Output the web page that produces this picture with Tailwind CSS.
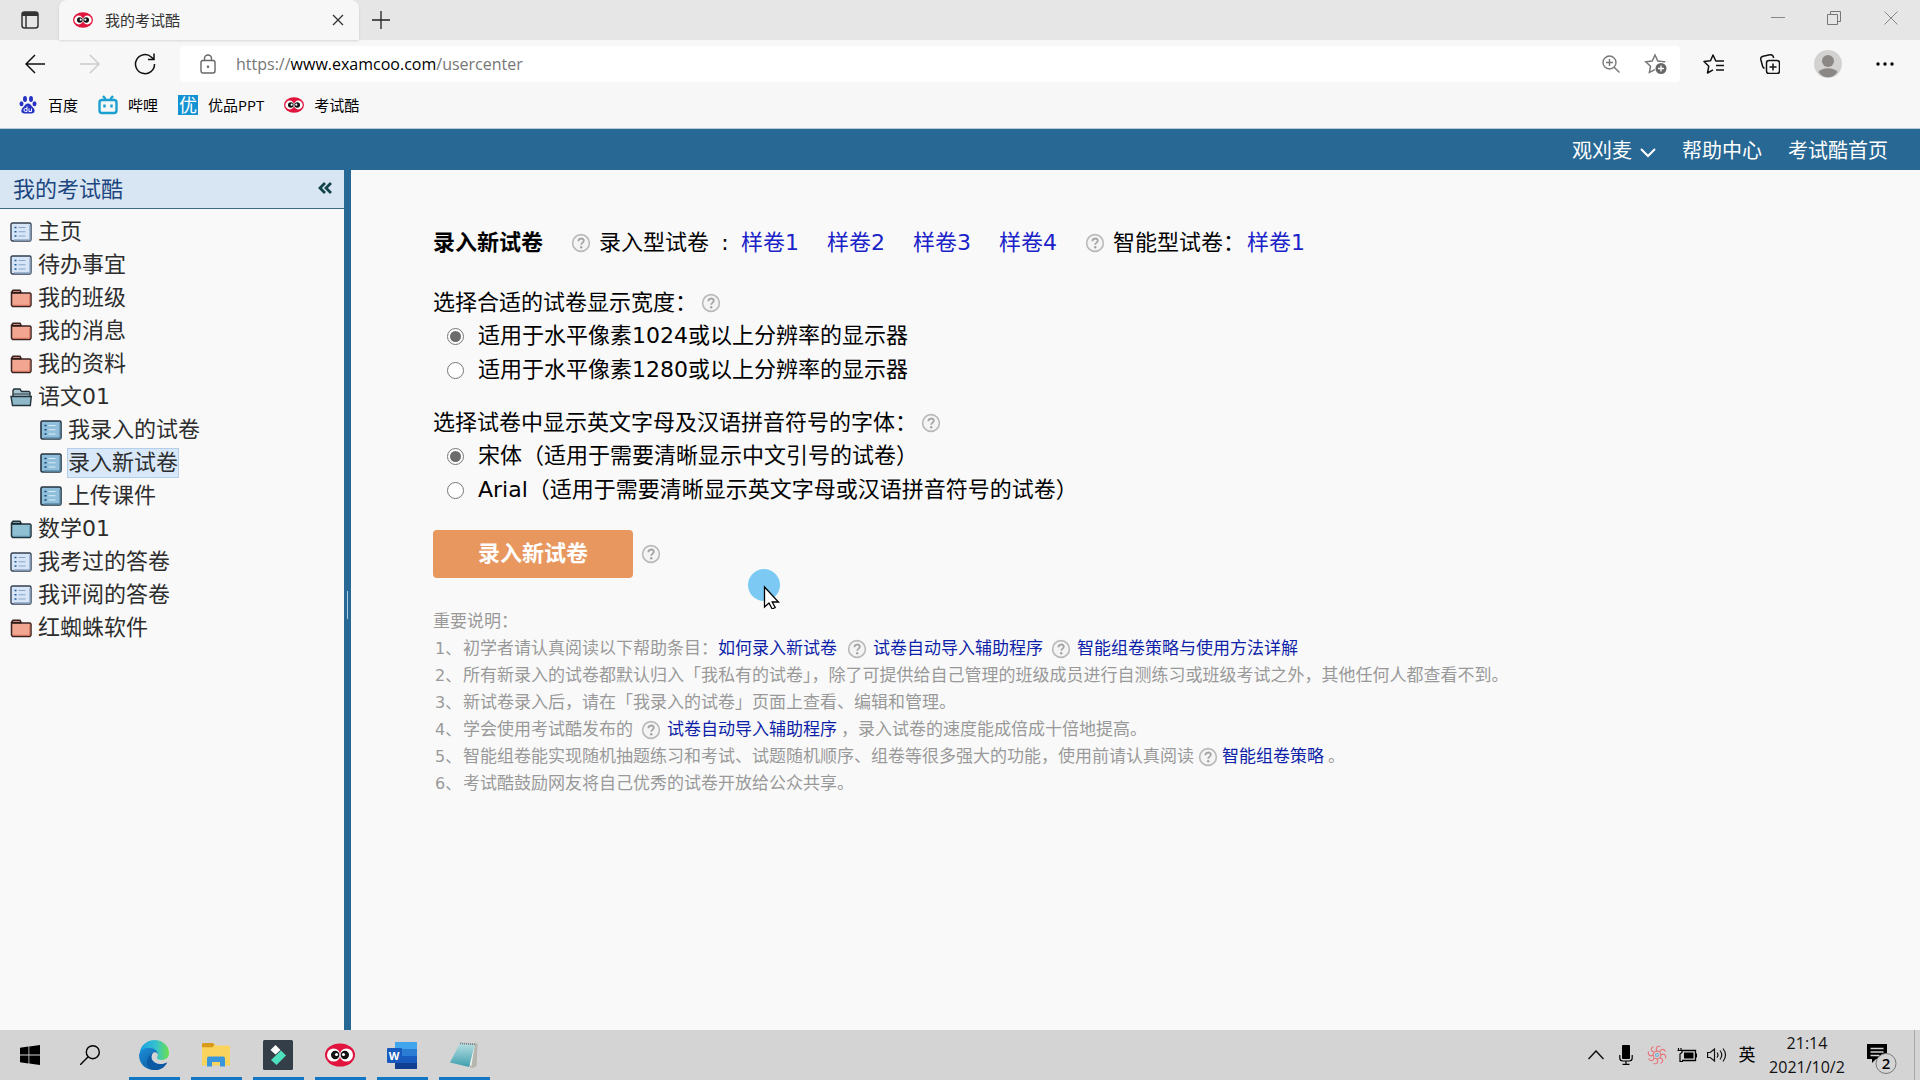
<!DOCTYPE html>
<html lang="zh-CN">
<head>
<meta charset="utf-8">
<title>我的考试酷</title>
<script src="https://cdn.jsdelivr.net/npm/@tailwindcss/browser@4"></script>
</head>
<body class="flex h-screen flex-col overflow-hidden bg-[#f9f9f9] font-['Open_Sans','Noto_Sans_CJK_SC',sans-serif] text-[15px] leading-5 text-black">
<svg class="absolute size-0" aria-hidden="true">
  <defs>
    <linearGradient id="edgeA" x1="0" y1="0" x2="1" y2="0"><stop offset="0" stop-color="#1aa0e0"/><stop offset=".55" stop-color="#35c1d0"/><stop offset="1" stop-color="#6be04a"/></linearGradient>
    <linearGradient id="edgeB" x1="0" y1="0" x2="1" y2="1"><stop offset="0" stop-color="#1b8fd8"/><stop offset="1" stop-color="#0c4f92"/></linearGradient>
    <linearGradient id="note" x1="0" y1="0" x2="0" y2="1"><stop offset="0" stop-color="#b9e0e4"/><stop offset="1" stop-color="#3e9fae"/></linearGradient>
    <symbol id="owl" viewBox="0 0 30 24">
      <ellipse cx="15" cy="12" rx="15" ry="11.5" fill="#e0143c"/>
      <circle cx="8.6" cy="12" r="6.6" fill="#fff"/><circle cx="21.4" cy="12" r="6.6" fill="#fff"/>
      <circle cx="10.2" cy="12" r="4.2" fill="#111"/><circle cx="19.8" cy="12" r="4.2" fill="#111"/>
      <circle cx="11.5" cy="11.5" r="1.6" fill="#fff"/><circle cx="18.5" cy="11.5" r="1.6" fill="#fff"/>
    </symbol>
    <symbol id="help" viewBox="0 0 20 20">
      <circle cx="10" cy="10" r="8.4" fill="#f4f4f4" stroke="#b9b9b9" stroke-width="1.6"/>
      <path d="M7.4 8.2c0-3.6 5.4-3.4 5.4-.4 0 1.8-2.6 1.9-2.6 4" fill="none" stroke="#a3a3a3" stroke-width="1.8"/><circle cx="10.2" cy="14.2" r="1.2" fill="#a3a3a3"/>
    </symbol>
    <symbol id="page" viewBox="0 0 22 20">
      <rect x="1" y="1" width="20" height="18" rx="1.5" fill="#d6e6f8" stroke="#333f50" stroke-width="1.4"/>
      <path d="M20 3v15H4" fill="none" stroke="#8ea6c4" stroke-width="1.4"/>
      <path d="M4.5 5.5h2M4.5 9.7h2M4.5 14h2" stroke="#1f5b94" stroke-width="1.6"/><path d="M8.5 5.5h7M8.5 9.7h7M8.5 14h7" stroke="#8ba5c2" stroke-width="1.1"/>
    </symbol>
    <symbol id="pageb" viewBox="0 0 22 20">
      <rect x="1" y="1" width="20" height="18" rx="1.5" fill="#8fbfdb" stroke="#25333f" stroke-width="1.6"/>
      <path d="M20 3v15H4" fill="none" stroke="#5d8ba8" stroke-width="1.4"/>
      <path d="M4.5 5.5h2M4.5 9.7h2M4.5 14h2" stroke="#0f4673" stroke-width="1.6"/><path d="M8.5 5.5h7M8.5 9.7h7M8.5 14h7" stroke="#dcecf5" stroke-width="1.1"/>
    </symbol>
    <symbol id="folder" viewBox="0 0 22 20">
      <path d="M1.5 17V4.200l1.500-2h7l1.500 2.800H20l1 1v11l-1 1.500H2.500z" fill="#f2a692" stroke="#3a2320" stroke-width="1.5"/>
      <path d="M2 4.800h9" stroke="#2b1a18" stroke-width="2"/><path d="M19.800 7v10.300H3.500" fill="none" stroke="#d0705a"/>
    </symbol>
    <symbol id="folderb" viewBox="0 0 22 20">
      <path d="M1.500 17V4.200l1.500-2h7l1.500 2.800H20l1 1v11l-1 1.500H2.500z" fill="#8fbfd3" stroke="#22333b" stroke-width="1.500"/>
      <path d="M2 4.800h9" stroke="#17252b" stroke-width="2"/><path d="M19.800 7v10.300H3.500" fill="none" stroke="#5690aa"/>
    </symbol>
    <symbol id="folderopen" viewBox="0 0 22 20">
      <path d="M3 17V3.500l1-1.500h6l1.500 2.500H19l1 1V17z" fill="#a9c5cf" stroke="#22333b" stroke-width="1.400"/>
      <path d="M1 9.500h20.300l-1 9H2.500z" fill="#8fb9c9" stroke="#22333b" stroke-width="1.400"/><path d="M3.500 7h16" stroke="#22333b"/>
    </symbol>
  </defs>
</svg>

<!-- tab strip -->
<header class="shrink-0 bg-[#f7f7f7]">
  <div class="flex h-10 items-stretch bg-[#e7e6e7]">
    <button aria-label="标签页操作" class="flex w-[59px] items-center justify-center">
      <svg class="size-[18px]" viewBox="0 0 18 18" fill="none" stroke="#333" stroke-width="1.500"><rect x="1" y="1" width="16" height="16" rx="2.500"/><path d="M1 3h16" stroke-width="4"/><path d="M5 5v12"/></svg>
    </button>
    <div class="flex w-[300px] items-center gap-3 rounded-t-lg bg-[#f7f7f7] pr-[11px] pl-3.5 shadow">
      <svg class="h-4 w-5"><use href="#owl"/></svg>
      <span class="flex-1 text-[#333]">我的考试酷</span>
      <button aria-label="关闭标签页" class="flex size-5 items-center justify-center"><svg class="size-3" viewBox="0 0 12 12" stroke="#333" stroke-width="1.300"><path d="M1 1l10 10M11 1L1 11"/></svg></button>
    </div>
    <button aria-label="新建标签页" class="flex w-11 items-center justify-center"><svg class="size-[18px]" viewBox="0 0 18 18" stroke="#222" stroke-width="1.300"><path d="M9 0v18M0 9h18"/></svg></button>
    <div class="ml-auto flex pb-1">
      <button aria-label="最小化" class="flex w-14 items-center justify-center"><svg class="size-3.5" viewBox="0 0 14 14" stroke="#888"><path d="M0 6.500h14"/></svg></button>
      <button aria-label="还原" class="flex w-14 items-center justify-center"><svg class="size-3.5" viewBox="0 0 14 14" fill="none" stroke="#777"><path d="M.5 3.500h10v10H.5zM3.500 3V.5h10v10H11"/></svg></button>
      <button aria-label="关闭" class="flex w-[58px] items-center justify-center"><svg class="size-3.5" viewBox="0 0 14 14" stroke="#888"><path d="M.5.5l13 13M13.500.5l-13 13"/></svg></button>
    </div>
  </div>

  <!-- toolbar -->
  <div class="flex h-12 items-center pl-[7px]">
    <button aria-label="后退" class="flex w-[55px] items-center justify-center"><svg class="size-5" viewBox="0 0 20 20" fill="none" stroke="#111" stroke-width="1.500"><path d="M10 1l-9 9 9 9M1 10h19"/></svg></button>
    <button aria-label="前进" class="flex w-[55px] items-center justify-center"><svg class="size-5" viewBox="0 0 20 20" fill="none" stroke="#ccc" stroke-width="1.500"><path d="M10 1l9 9-9 9M19 10H0"/></svg></button>
    <button aria-label="刷新" class="flex w-[55px] items-center justify-center"><svg class="size-[22px]" viewBox="0 0 22 22" fill="none" stroke="#111" stroke-width="1.500"><path d="M20.500 11A9.500 9.500 0 1 1 17.500 4.200L20 6.500M20 .5v6h-6"/></svg></button>
    <div class="ml-2 flex h-9 flex-1 items-center rounded bg-white pl-5 pr-3">
      <svg class="h-5 w-4 shrink-0" viewBox="0 0 16 20" fill="none" stroke="#666" stroke-width="1.400"><rect x="1" y="6.500" width="14" height="12.500" rx="2"/><path d="M4.500 6.500V4.500a3.500 3.500 0 0 1 7 0v2"/><circle cx="8" cy="12.700" r=".6" fill="#666"/></svg>
      <a href="#" class="ml-5 flex-1 text-[16px] text-[#767676]">https://<span class="text-black">www.examcoo.com</span>/usercenter</a>
      <button aria-label="缩放" class="mr-6"><svg class="size-[18px]" viewBox="0 0 18 18" fill="none" stroke="#777" stroke-width="1.400"><circle cx="7.500" cy="7.500" r="6.500"/><path d="M12.200 12.200L17.500 17.500M4 7.500h7M7.500 4v7"/></svg></button>
      <button aria-label="添加到收藏夹"><svg class="h-[22px] w-6" viewBox="0 0 24 22"><path d="M11 2l2.800 6 6.400.8-4.700 4.400 1.200 6.200L11 16.500l-5.600 2.900 1.100-6.200L1.800 8.800l6.400-.8z" fill="none" stroke="#777" stroke-width="1.500"/><circle cx="17" cy="15.500" r="6.500" fill="#fff"/><circle cx="17" cy="15.500" r="5.500" fill="#666"/><path d="M14 15.500h6M17 12.500v6" stroke="#fff" stroke-width="1.300"/></svg></button>
    </div>
    <div class="flex items-center pl-1.5 pr-2">
      <button aria-label="收藏夹" class="flex w-14 items-center justify-center"><svg class="h-5 w-[22px]" viewBox="0 0 22 20" fill="none" stroke="#111" stroke-width="1.500"><path d="M13 7h-.2L10 1 7.500 6.800 1 7.500l4.800 4.700L4.500 19l5.500-3.200M13 7h8M13 11.500h8M13 16h8" stroke-linejoin="round"/></svg></button>
      <button aria-label="集锦" class="flex w-14 items-center justify-center"><svg class="size-5" viewBox="0 0 20 20" fill="none" stroke="#111" stroke-width="1.500"><rect x="6.500" y="6.500" width="13" height="13" rx="2.500"/><path d="M13 9.500v7M9.500 13h7M4.500 14.500C3 14 2.800 13 2.400 11.500L.8 5.500C.4 3.700 1.300 2.600 3 2.200L10 .8c2-.4 3 .4 3.400 2.200l.2 1"/></svg></button>
      <button aria-label="个人资料" class="flex w-[60px] items-center justify-center"><svg class="size-7" viewBox="0 0 28 28"><circle cx="14" cy="14" r="14" fill="#d4d2d1"/><circle cx="14" cy="11" r="6" fill="#8a8785"/><path d="M4.500 22c4-5 15-5 19 0-4 7-15 7-19 0z" fill="#8a8785"/></svg></button>
      <button aria-label="设置及其他" class="flex w-[54px] items-center justify-center"><svg class="h-1 w-[18px]" viewBox="0 0 18 4"><circle cx="2" cy="2" r="1.700"/><circle cx="9" cy="2" r="1.700"/><circle cx="16" cy="2" r="1.700"/></svg></button>
    </div>
  </div>

  <!-- favourites -->
  <nav class="flex h-[41px] items-center gap-5 border-b border-[#b9cbd8] pb-1.5 pl-[18px]">
    <a href="#" class="flex items-center gap-2.5">
      <svg class="size-5" viewBox="0 0 20 20" fill="#2733c4"><ellipse cx="7" cy="4" rx="2" ry="2.900"/><ellipse cx="13" cy="4" rx="2" ry="2.900"/><ellipse cx="3.500" cy="8.800" rx="2" ry="2.500"/><ellipse cx="16.500" cy="8.800" rx="2" ry="2.500"/><path d="M10 8.500c2.500 0 3 2 5 4 3 3 1.500 6-1.500 6h-7c-3 0-4.500-3-1.500-6 2-2 2.500-4 5-4z"/><path d="M9 11.500v5H7.500a1.300 1.300 0 0 1 0-3H9M11 13.500v3h2.500v-3" fill="none" stroke="#fff"/></svg>百度</a>
    <a href="#" class="flex items-center gap-2.5">
      <svg class="size-5" viewBox="0 0 20 20" fill="none" stroke="#1aa0d0" stroke-width="2.400"><rect x="1.500" y="5" width="17" height="13" rx="2.500"/><path d="M5 1l2.500 3M15 1l-2.500 3M6.500 9.500v3M13.500 9.500v3"/></svg>哔哩</a>
    <a href="#" class="flex items-center gap-2.5"><span class="flex size-5 items-center justify-center bg-[#1592d2] text-[18px] text-white">优</span>优品PPT</a>
    <a href="#" class="flex items-center gap-2.5"><svg class="h-4 w-5"><use href="#owl"/></svg>考试酷</a>
  </nav>
</header>

<!-- site bar -->
<div class="flex h-[41px] shrink-0 items-center justify-end gap-[26px] bg-[#286894] pt-0.5 pr-8 text-[20px] text-white">
  <button class="flex items-center gap-2">观刈麦<svg class="mt-1 h-2.5 w-4" viewBox="0 0 16 10" fill="none" stroke="#fff" stroke-width="2"><path d="M1 1l7 7 7-7"/></svg></button>
  <a href="#">帮助中心</a>
  <a href="#">考试酷首页</a>
</div>

<div class="flex min-h-0 flex-1 font-['DejaVu_Sans','Noto_Sans_CJK_SC',sans-serif] text-[22px]">
  <!-- navigation tree -->
  <aside class="w-[344px] shrink-0 leading-7 text-[#2d2d2d]">
    <div class="flex h-[39px] items-center justify-between border-b border-[#3b6b85] bg-[#d8e6f3] pt-0.5 pr-3 pl-[13px] text-[#1d4680]">
      <h2>我的考试酷</h2>
      <button aria-label="折叠" class="pb-1"><svg class="h-3 w-3.5" viewBox="0 0 14 12" fill="none" stroke="#12454a" stroke-width="2.800"><path d="M7 1L2 6l5 5M13 1L8 6l5 5"/></svg></button>
    </div>
    <ul class="pt-1.5 pl-2.5 *:flex *:h-[33px] *:items-center *:gap-1.5">
      <li><svg class="h-5 w-[22px]"><use href="#page"/></svg><a href="#">主页</a></li>
      <li><svg class="h-5 w-[22px]"><use href="#page"/></svg><a href="#">待办事宜</a></li>
      <li><svg class="h-5 w-[22px]"><use href="#folder"/></svg><a href="#">我的班级</a></li>
      <li><svg class="h-5 w-[22px]"><use href="#folder"/></svg><a href="#">我的消息</a></li>
      <li><svg class="h-5 w-[22px]"><use href="#folder"/></svg><a href="#">我的资料</a></li>
      <li><svg class="h-5 w-[22px]"><use href="#folderopen"/></svg><a href="#">语文01</a></li>
      <li class="pl-[30px]"><svg class="h-5 w-[22px]"><use href="#pageb"/></svg><a href="#">我录入的试卷</a></li>
      <li class="pl-[30px]"><svg class="h-5 w-[22px]"><use href="#pageb"/></svg><a href="#" class="-mx-px border border-[#b5cfe8] bg-[#d8e8f8]">录入新试卷</a></li>
      <li class="pl-[30px]"><svg class="h-5 w-[22px]"><use href="#pageb"/></svg><a href="#">上传课件</a></li>
      <li><svg class="h-5 w-[22px]"><use href="#folderb"/></svg><a href="#">数学01</a></li>
      <li><svg class="h-5 w-[22px]"><use href="#page"/></svg><a href="#">我考过的答卷</a></li>
      <li><svg class="h-5 w-[22px]"><use href="#page"/></svg><a href="#">我评阅的答卷</a></li>
      <li><svg class="h-5 w-[22px]"><use href="#folder"/></svg><a href="#">红蜘蛛软件</a></li>
    </ul>
  </aside>
  <div class="flex w-[7px] shrink-0 items-center justify-center bg-[#286894] pt-2.5"><span class="h-7 w-px bg-[#a9cbe0]"></span></div>

  <!-- page content -->
  <main class="min-w-0 flex-1 pt-[57px] pl-[82px]">
    <div class="flex h-8 items-center">
      <h1 class="mr-7 font-bold">录入新试卷</h1>
      <svg class="mr-2 size-5"><use href="#help"/></svg>录入型试卷<span class="mx-1.5 w-5 text-center">:</span>
      <span class="flex gap-7 text-[#1a22c8]"><a href="#">样卷1</a><a href="#">样卷2</a><a href="#">样卷3</a><a href="#">样卷4</a></span>
      <svg class="mr-2 ml-7 size-5"><use href="#help"/></svg>智能型试卷：<a href="#" class="ml-0.5 text-[#1a22c8]">样卷1</a>
    </div>
    <fieldset class="mt-7">
      <legend class="flex h-8 items-center gap-1">选择合适的试卷显示宽度：<svg class="size-5"><use href="#help"/></svg></legend>
      <label class="flex h-[34px] items-center gap-3.5 pl-3.5"><input type="radio" name="width" checked class="flex size-[17px] appearance-none items-center justify-center rounded-full border border-[#777] bg-white before:size-[11px] before:rounded-full checked:before:bg-[#6b6b6b]">适用于水平像素1024或以上分辨率的显示器</label>
      <label class="flex h-[34px] items-center gap-3.5 pl-3.5"><input type="radio" name="width" class="flex size-[17px] appearance-none items-center justify-center rounded-full border border-[#777] bg-white before:size-[11px] before:rounded-full checked:before:bg-[#6b6b6b]">适用于水平像素1280或以上分辨率的显示器</label>
    </fieldset>
    <fieldset class="mt-5">
      <legend class="flex h-8 items-center gap-1">选择试卷中显示英文字母及汉语拼音符号的字体：<svg class="size-5"><use href="#help"/></svg></legend>
      <label class="flex h-[34px] items-center gap-3.5 pl-3.5"><input type="radio" name="font" checked class="flex size-[17px] appearance-none items-center justify-center rounded-full border border-[#777] bg-white before:size-[11px] before:rounded-full checked:before:bg-[#6b6b6b]">宋体（适用于需要清晰显示中文引号的试卷）</label>
      <label class="flex h-[34px] items-center gap-3.5 pl-3.5"><input type="radio" name="font" class="flex size-[17px] appearance-none items-center justify-center rounded-full border border-[#777] bg-white before:size-[11px] before:rounded-full checked:before:bg-[#6b6b6b]">Arial（适用于需要清晰显示英文字母或汉语拼音符号的试卷）</label>
    </fieldset>
    <div class="mt-[23px] flex items-center gap-2">
      <button class="h-12 w-[200px] rounded bg-[#e8975f] font-bold text-white">录入新试卷</button>
      <svg class="size-5"><use href="#help"/></svg>
    </div>
    <section class="mt-[30px] text-[17px] leading-[27px] whitespace-nowrap text-[#999]">
      <h3>重要说明：</h3>
      <ol class="*:flex *:items-center">
        <li><span class="w-[30px] pl-0.5 text-[16px]">1、</span>初学者请认真阅读以下帮助条目：<a href="#" class="text-[#0e1fa8]">如何录入新试卷</a><svg class="mr-1.5 ml-2.5 size-5"><use href="#help"/></svg><a href="#" class="text-[#0e1fa8]">试卷自动导入辅助程序</a><svg class="mr-1.5 ml-2 size-5"><use href="#help"/></svg><a href="#" class="text-[#0e1fa8]">智能组卷策略与使用方法详解</a></li>
        <li><span class="w-[30px] pl-0.5 text-[16px]">2、</span>所有新录入的试卷都默认归入「我私有的试卷」，除了可提供给自己管理的班级成员进行自测练习或班级考试之外，其他任何人都查看不到。</li>
        <li><span class="w-[30px] pl-0.5 text-[16px]">3、</span>新试卷录入后，请在「我录入的试卷」页面上查看、编辑和管理。</li>
        <li><span class="w-[30px] pl-0.5 text-[16px]">4、</span>学会使用考试酷发布的<svg class="mr-1.5 ml-2 size-5"><use href="#help"/></svg><a href="#" class="mr-1 text-[#0e1fa8]">试卷自动导入辅助程序</a>，录入试卷的速度能成倍成十倍地提高。</li>
        <li><span class="w-[30px] pl-0.5 text-[16px]">5、</span>智能组卷能实现随机抽题练习和考试、试题随机顺序、组卷等很多强大的功能，使用前请认真阅读<svg class="mx-1 size-5"><use href="#help"/></svg><a href="#" class="mr-1 text-[#0e1fa8]">智能组卷策略</a>。</li>
        <li><span class="w-[30px] pl-0.5 text-[16px]">6、</span>考试酷鼓励网友将自己优秀的试卷开放给公众共享。</li>
      </ol>
    </section>
  </main>
</div>

<!-- mouse pointer with highlight -->
<svg class="pointer-events-none absolute top-[569px] left-[748px] h-10 w-8" viewBox="0 0 32 40"><circle cx="16" cy="16" r="16" fill="#7ccaf3"/><path d="M16.500 18v20l4.500-4 3.200 6 3-1.500-3-5.500h6.300z" fill="#fff" stroke="#000" stroke-width="1.300"/></svg>

<!-- taskbar -->
<footer class="flex h-[50px] shrink-0 bg-[#d5d4d4]">
  <button aria-label="开始" class="flex w-[60px] items-center justify-center"><svg class="size-5" viewBox="0 0 20 20"><path d="M0 2.800l8.500-1.200v8H0zM9.300 1.500L20 0v9.600H9.300zM0 10.400h8.500v8L0 17.200zM9.300 10.400H20V20L9.300 18.500z"/></svg></button>
  <button aria-label="搜索" class="flex w-[60px] items-center justify-center"><svg class="size-5" viewBox="0 0 20 20" fill="none" stroke="#000" stroke-width="1.400"><circle cx="12.800" cy="7.200" r="6.500"/><path d="M8.200 11.800L0 20"/></svg></button>
  <div class="flex gap-[11px] pl-[9px] *:flex *:w-[51px] *:items-center *:justify-center *:border-b-3 *:border-[#1176c4] *:pt-[3px] *:pr-0.5">
    <button aria-label="Edge"><svg class="size-[30px]" viewBox="0 0 30 30"><path d="M1 11C3 4 9 0 15.500 0 24 0 30 6 30 13c0 5-3.500 7-7.500 7-3 0-5-1-4.500-2.500 2-3 .5-7.500-5-7.500C8 10 2 12 1 17z" fill="url(#edgeA)"/><path d="M0 15C1 9 7 7.500 11.500 8c4.500.5 7.500 3.500 7.500 6.500-1-2-3.500-2.800-5-1.500-4 4 0 11 7 11 3 0 5-.6 7-1.600C26 27.500 21 30 15 30 6.500 30 0 23.500 0 15z" fill="url(#edgeB)"/><path d="M14 13c-3 2.500-2.500 9.500 4.500 11 4 .7 7-.3 9.500-1.600C25 28 20 30 15 30 9 29 7 24 8.500 19.500 9.500 16 12 14 14 13z" fill="#0c59a4"/></svg></button>
    <button aria-label="文件资源管理器"><svg class="h-6 w-7" viewBox="0 0 28 24"><path d="M0 1.500Q0 0 1.500 0H11l3 2.500H26.500Q28 2.500 28 4v18.500H0z" fill="#fad35e"/><path d="M0 1.500Q0 0 1.500 0H11l1.500 1.500-2 2.800H0z" fill="#d99a1b"/><path d="M5 23.500v-8q0-2 2-2h14q2 0 2 2v8h-5V19h-8v4.500z" fill="#3896dc"/></svg></button>
    <button aria-label="视频剪辑"><svg class="size-[30px]" viewBox="0 0 30 30"><rect width="30" height="30" rx="1.500" fill="#333e48"/><path d="M7.500 10l5-5 5 5-5 4.500z" fill="#fff"/><path d="M18 10.500l5 5-9.500 9.500-5.500-5z" fill="#4fe0c0"/></svg></button>
    <button aria-label="考试酷"><svg class="h-6 w-[30px]"><use href="#owl"/></svg></button>
    <button aria-label="Word"><span class="relative block h-[27px] w-[30px]"><svg class="size-full" viewBox="0 0 30 27"><path d="M8 0h22v7H8z" fill="#41a5ee"/><path d="M8 7h22v7H8z" fill="#2b7cd3"/><path d="M8 14h22v7H8z" fill="#185abd"/><path d="M8 21h22v6H8z" fill="#103f91"/><rect y="6" width="15" height="15" rx="1" fill="#185abd"/></svg><span class="absolute top-1.5 left-0 w-[15px] text-center text-[11px] leading-[15px] font-bold text-white">W</span></span></button>
    <button aria-label="记事本"><svg class="h-[26px] w-7" viewBox="0 0 28 26"><path d="M10 1l17 1-1 22-5 2z" fill="#eef0ee" stroke="#9a9a8e" stroke-width=".7"/><path d="M10 1l15 1-6 23L0 20.500z" fill="url(#note)"/><path d="M25 2l2 .5-1 21.500-5 2z" fill="#b5b7ae"/><path d="M10 1.500l15 1" stroke="#777" stroke-width="1.500" stroke-dasharray="1 1"/></svg></button>
  </div>
  <div class="ml-auto flex items-center">
    <button aria-label="显示隐藏的图标" class="flex w-7 items-center justify-center"><svg class="h-2.5 w-4" viewBox="0 0 16 10" fill="none" stroke="#111" stroke-width="1.500"><path d="M.5 9L8 1l7.500 8"/></svg></button>
    <button aria-label="麦克风" class="flex w-[31px] items-center justify-center"><svg class="h-5 w-3.5" viewBox="0 0 14 20"><rect x="3" width="8" height="14" rx="1"/><path d="M.8 10v3q0 3 3 3h6.400q3 0 3-3v-3M7 16v3.300M3.500 19.300h7" fill="none" stroke="#000" stroke-width="1.200"/></svg></button>
    <button aria-label="托盘程序" class="flex w-[31px] items-center justify-center"><svg class="size-5" viewBox="0 0 20 20" fill="none" stroke="#e8757d" stroke-width="1.200"><g id="petals"><path d="M10 6C8 3 10 .5 13.500 1.500M14 10c3-2 5.500 0 4.500 3.500M10 14c2 3 0 5.500-3.500 4.500M6 10c-3 2-5.500 0-4.500-3.500"/></g><use href="#petals" transform="rotate(45 10 10)"/><circle cx="10" cy="10" r="3.800"/><circle cx="10" cy="10" r="1.500" stroke="#6ab0d8"/></svg></button>
    <button aria-label="电池" class="flex w-[30px] items-center justify-center"><svg class="h-3.5 w-5" viewBox="0 0 20 14"><path d="M5 2.500h13.500v10H5" fill="none" stroke="#000" stroke-width="1.300"/><path d="M7 4.500h9.500v6H7zM18.500 5.500H20v4h-1.500z"/><path d="M1.500 0v2M4 0v2M.5 2.500h4.500v2L3 6v7.500h3" fill="none" stroke="#000" stroke-width="1.200"/></svg></button>
    <button aria-label="音量" class="flex w-[30px] items-center justify-center"><svg class="h-4 w-5" viewBox="0 0 20 16" fill="none" stroke="#111" stroke-width="1.200"><path d="M.6 5.500h2.600L7.500 2v12l-4.300-3.500H.6zM10 5.500q2 2.500 0 5M13 3.500q3.500 4.500 0 9M16 1.500q5 6.500 0 13"/></svg></button>
    <button class="w-[30px] text-center text-[17px]">英</button>
    <div class="w-[90px] text-center text-[16px] leading-6 text-[#111]"><div>21:14</div><div>2021/10/2</div></div>
    <button aria-label="通知" class="relative ml-3.5 h-10 w-[34px]"><svg class="size-full" viewBox="0 0 34 40"><path d="M1 9h20v15H10l-4 4v-4H1z"/><path d="M4.500 13.500h13M4.500 17h13M4.500 20.500h9" stroke="#d5d4d4" stroke-width="1.300"/><circle cx="20" cy="28.500" r="10" fill="#d5d4d4" stroke="#777"/></svg><span class="absolute top-[18px] left-[10px] w-5 text-center text-[15px] leading-5 font-semibold">2</span></button>
    <span class="mr-[5px] ml-3.5 h-full w-px bg-[#a8a8a8]"></span>
  </div>
</footer>
</body>
</html>
